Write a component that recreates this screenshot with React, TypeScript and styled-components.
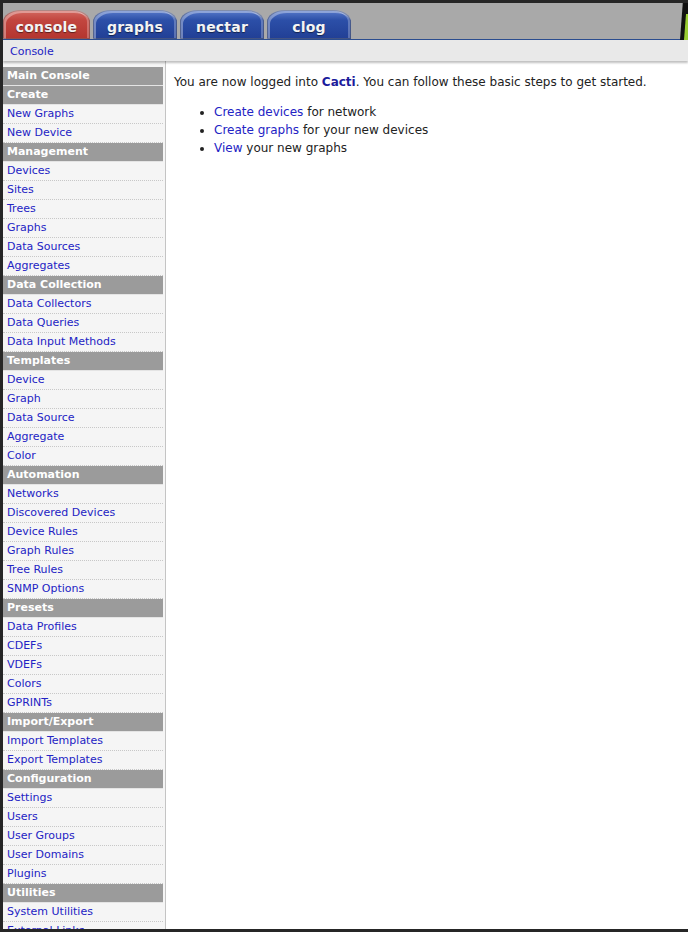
import React from "react";
import styled, { createGlobalStyle } from "styled-components";

const Global = createGlobalStyle`
  html, body { margin: 0; padding: 0; background: #262626; }
  body { font-family: "DejaVu Sans", Verdana, sans-serif; }
  * { box-sizing: border-box; }
`;

const Frame = styled.div`
  height: 932px;
  padding: 3px 0 3px 3px;
  overflow: hidden;
`;

const Page = styled.div`
  height: 926px;
  background: #fff;
  display: flex;
  flex-direction: column;
  overflow: hidden;
`;

const TabBar = styled.div`
  height: 37px;
  background: #a9a9a9;
  display: flex;
  align-items: flex-end;
  gap: 3px;
  border-bottom: 1px solid #2b4d8f;
  position: relative;
`;

const Tab = styled.div<{ $active?: boolean; $w: number }>`
  width: ${(p) => p.$w}px;
  height: 29px;
  border-radius: 18px 18px 0 0 / 12px 12px 0 0;
  background: ${(p) =>
    p.$active
      ? "linear-gradient(#d46a62 0%, #c2463f 35%, #b3352f 100%)"
      : "linear-gradient(#5a7ccc 0%, #2c4fa8 35%, #213f95 100%)"};
  box-shadow: inset 0 0 0 1px rgba(0,0,0,0.25), inset 2px 2px 0 1px rgba(255,255,255,0.35),
    inset -2px 0 0 1px rgba(255,255,255,0.25);
  display: flex;
  align-items: center;
  justify-content: center;
  padding-top: 4px;
  color: #f4f4f4;
  font-weight: bold;
  font-size: 14px;
  letter-spacing: 0.2px;
  text-shadow: 0 1px 1px rgba(0,0,0,0.5);
`;

const Corner = styled.svg`
  position: absolute;
  right: 0;
  top: -3px;
`;

const Crumbs = styled.div`
  height: 21px;
  background: #e9e9e9;
  display: flex;
  align-items: center;
  padding: 1px 0 0 7px;
  font-size: 11px;
  box-shadow: 0 2px 2px rgba(0,0,0,0.25);
  position: relative;
  z-index: 1;
`;

const Link = styled.a<{ $bold?: boolean }>`
  color: ${(p) => (p.$bold ? "#1c1c9c" : "#2323c4")};
  font-weight: ${(p) => (p.$bold ? "bold" : "normal")};
  text-decoration: none;
`;

const Body = styled.div`
  flex: 1;
  display: flex;
  min-height: 0;
`;

const Sidebar = styled.div`
  width: 163px;
  background: #f5f5f5;
  border-right: 1px solid #c4c4c4;
  padding: 6px 2px 0 0;
  overflow: hidden;
  flex-shrink: 0;
`;

const Header = styled.div`
  height: 19px;
  background: #9b9b9b;
  border-bottom: 1px solid #e4e4e4;
  color: #fff;
  font-weight: bold;
  font-size: 11px;
  line-height: 18px;
  padding-left: 4px;
`;

const Item = styled.div`
  height: 19px;
  border-bottom: 1px dotted #c8c8c8;
  font-size: 11px;
  line-height: 18px;
  padding-left: 4px;
  white-space: nowrap;
`;

const Main = styled.div`
  flex: 1;
  padding: 12px 8px;
  font-size: 12px;
  color: #222;
`;

const Intro = styled.p`
  margin: 0 0 12px;
  line-height: 18px;
`;

const Steps = styled.ul`
  margin: 0;
  padding-left: 40px;
  line-height: 18px;
`;

const menu: [string, string[]][] = [
  ["Main Console", []],
  ["Create", ["New Graphs", "New Device"]],
  ["Management", ["Devices", "Sites", "Trees", "Graphs", "Data Sources", "Aggregates"]],
  ["Data Collection", ["Data Collectors", "Data Queries", "Data Input Methods"]],
  ["Templates", ["Device", "Graph", "Data Source", "Aggregate", "Color"]],
  ["Automation", ["Networks", "Discovered Devices", "Device Rules", "Graph Rules", "Tree Rules", "SNMP Options"]],
  ["Presets", ["Data Profiles", "CDEFs", "VDEFs", "Colors", "GPRINTs"]],
  ["Import/Export", ["Import Templates", "Export Templates"]],
  ["Configuration", ["Settings", "Users", "User Groups", "User Domains", "Plugins"]],
  ["Utilities", ["System Utilities", "External Links"]],
];

const tabs: [string, number, boolean][] = [
  ["console", 87, true],
  ["graphs", 84, false],
  ["nectar", 84, false],
  ["clog", 84, false],
];

export default function App() {
  return (
    <>
      <Global />
      <Frame>
        <Page>
          <TabBar>
            {tabs.map(([t, w, a]) => (
              <Tab key={t} $w={w} $active={a}>
                {t}
              </Tab>
            ))}
            <Corner width="8" height="40" viewBox="0 0 8 40">
              <polygon points="3,0 8,0 8,40 0,40" fill="#111" />
              <polygon points="6,14 8,14 8,40 4,40" fill="#9acd32" />
            </Corner>
          </TabBar>
          <Crumbs>
            <Link href="#">Console</Link>
          </Crumbs>
          <Body>
            <Sidebar>
              {menu.map(([h, items]) => (
                <React.Fragment key={h}>
                  <Header>{h}</Header>
                  {items.map((i) => (
                    <Item key={i}>
                      <Link href="#">{i}</Link>
                    </Item>
                  ))}
                </React.Fragment>
              ))}
            </Sidebar>
            <Main>
              <Intro>
                You are now logged into <Link $bold href="#">Cacti</Link>. You can follow these basic steps to get started.
              </Intro>
              <Steps>
                <li>
                  <Link href="#">Create devices</Link> for network
                </li>
                <li>
                  <Link href="#">Create graphs</Link> for your new devices
                </li>
                <li>
                  <Link href="#">View</Link> your new graphs
                </li>
              </Steps>
            </Main>
          </Body>
        </Page>
      </Frame>
    </>
  );
}
